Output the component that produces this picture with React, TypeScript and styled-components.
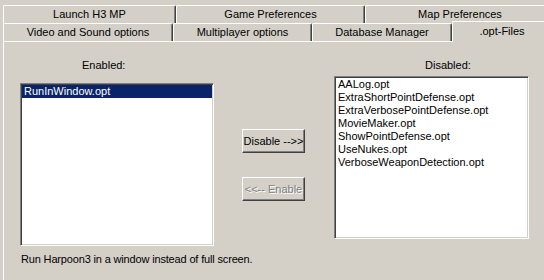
import React from 'react';
import styled, { createGlobalStyle } from 'styled-components';

const Global = createGlobalStyle`
  html, body { margin: 0; padding: 0; background: #d4d0c8; overflow: hidden; }
  body { font-family: "Liberation Sans", Arial, sans-serif; font-size: 11px; color: #000; }
`;

const Window = styled.div`
  width: 544px;
  height: 280px;
  box-sizing: border-box;
  padding: 5px 0 0 3px;
  display: flex;
  flex-direction: column;
  overflow: hidden;
  background: #d4d0c8;
`;

const TabRow = styled.div`
  display: flex;
  height: 18px;
  flex: 0 0 18px;
`;

const Tab = styled.div<{ $w: number; $active?: boolean }>`
  flex: 0 0 ${(p) => p.$w}px;
  box-sizing: border-box;
  border-top: 1px solid #fff;
  border-left: 1px solid #fff;
  border-right: 1px solid #404040;
  box-shadow: inset -1px 0 0 #808080;
  border-radius: 2px 2px 0 0;
  display: flex;
  align-items: center;
  justify-content: center;
  line-height: 13px;
  white-space: nowrap;
  background: #d4d0c8;
  ${(p) =>
    p.$active &&
    `
    position: relative;
    z-index: 1;
    margin-top: -2px;
    height: 21px;
    padding-bottom: 2px;
  `}
`;

const Panel = styled.div`
  flex: 1;
  border-top: 1px solid #fff;
  border-left: 1px solid #fff;
  padding-left: 16px;
  display: flex;
  flex-direction: column;
`;

const Columns = styled.div`
  display: flex;
  align-items: flex-start;
  margin-top: 17px;
`;

const ListColumn = styled.div<{ $w: number; $ml?: number }>`
  width: ${(p) => p.$w}px;
  margin-left: ${(p) => p.$ml ?? 0}px;
  display: flex;
  flex-direction: column;
`;

const Label = styled.div<{ $indent: number }>`
  padding-left: ${(p) => p.$indent}px;
  line-height: 13px;
  height: 13px;
  white-space: nowrap;
`;

const ListBox = styled.div<{ $mt: number }>`
  margin-top: ${(p) => p.$mt}px;
  height: 163px;
  box-sizing: border-box;
  background: #fff;
  border-top: 1px solid #808080;
  border-left: 1px solid #808080;
  border-right: 1px solid #fff;
  border-bottom: 1px solid #fff;
  box-shadow: inset 1px 1px 0 #404040, inset -1px -1px 0 #d4d0c8;
  padding: 1px;
  display: flex;
  flex-direction: column;
`;

const ListItem = styled.div<{ $selected?: boolean }>`
  height: 13px;
  line-height: 13px;
  padding-left: 2px;
  white-space: nowrap;
  background: ${(p) => (p.$selected ? '#0a246a' : 'transparent')};
  color: ${(p) => (p.$selected ? '#fff' : '#000')};
`;

const ButtonColumn = styled.div`
  margin-left: 28px;
  width: 63px;
  padding-top: 70px;
  display: flex;
  flex-direction: column;
  gap: 24px;
`;

const Button = styled.button`
  width: 63px;
  height: 24px;
  box-sizing: border-box;
  padding: 0;
  margin: 0;
  font: inherit;
  background: #d4d0c8;
  color: #000;
  border-top: 1px solid #fff;
  border-left: 1px solid #fff;
  border-right: 1px solid #404040;
  border-bottom: 1px solid #404040;
  box-shadow: inset -1px -1px 0 #808080;
  white-space: nowrap;
  &:disabled {
    color: #808080;
    text-shadow: 1px 1px 0 #fff;
  }
`;

const Footer = styled.div`
  margin-top: 7px;
  padding-left: 1px;
  line-height: 13px;
  letter-spacing: -0.16px;
  white-space: nowrap;
`;

const enabled = ['RunInWindow.opt'];
const disabled = [
  'AALog.opt',
  'ExtraShortPointDefense.opt',
  'ExtraVerbosePointDefense.opt',
  'MovieMaker.opt',
  'ShowPointDefense.opt',
  'UseNukes.opt',
  'VerboseWeaponDetection.opt',
];

export default function App() {
  return (
    <>
      <Global />
      <Window>
        <TabRow>
          <Tab $w={173}>Launch H3 MP</Tab>
          <Tab $w={189}>Game Preferences</Tab>
          <Tab $w={190}>Map Preferences</Tab>
        </TabRow>
        <TabRow>
          <Tab $w={170}>Video and Sound options</Tab>
          <Tab $w={139}>Multiplayer options</Tab>
          <Tab $w={140}>Database Manager</Tab>
          <Tab $w={100} $active>
            .opt-Files
          </Tab>
        </TabRow>
        <Panel>
          <Columns>
            <ListColumn $w={194}>
              <Label $indent={62}>Enabled:</Label>
              <ListBox $mt={11}>
                {enabled.map((e) => (
                  <ListItem key={e} $selected>
                    {e}
                  </ListItem>
                ))}
              </ListBox>
            </ListColumn>
            <ButtonColumn>
              <Button>Disable --&gt;&gt;</Button>
              <Button disabled>&lt;&lt;-- Enable</Button>
            </ButtonColumn>
            <ListColumn $w={195} $ml={29}>
              <Label $indent={91}>Disabled:</Label>
              <ListBox $mt={4}>
                {disabled.map((d) => (
                  <ListItem key={d}>{d}</ListItem>
                ))}
              </ListBox>
            </ListColumn>
          </Columns>
          <Footer>Run Harpoon3 in a window instead of full screen.</Footer>
        </Panel>
      </Window>
    </>
  );
}
